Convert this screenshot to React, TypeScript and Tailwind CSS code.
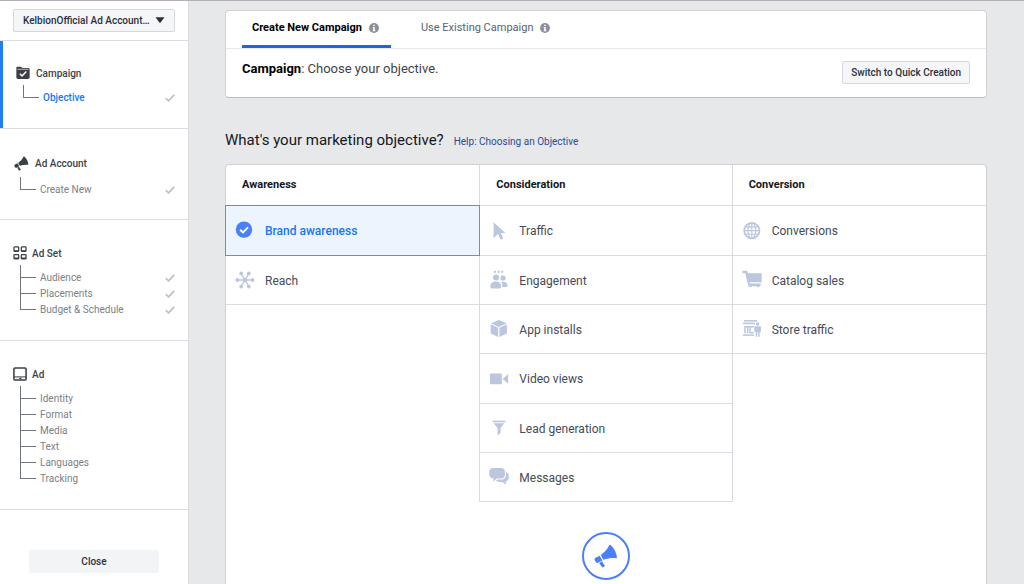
import { useState, type ReactNode } from 'react';

function Drawing({ children, className = 'size-5' }: { children: ReactNode; className?: string }) {
  return (
    <svg viewBox="0 0 20 20" fill="currentColor" aria-hidden="true" className={`shrink-0 ${className}`}>
      {children}
    </svg>
  );
}

const icons: Record<string, ReactNode> = {
  reach: (
    <Drawing>
      <path d="M2.5 10h15M6 3.5l8 13M14 3.5l-8 13" stroke="currentColor" strokeWidth="1.4" />
      <circle cx="10" cy="10" r="2.2" />
      <circle cx="2.4" cy="10" r="1.9" />
      <circle cx="17.6" cy="10" r="1.9" />
      <circle cx="6.2" cy="3.4" r="1.9" />
      <circle cx="13.8" cy="3.4" r="1.9" />
      <circle cx="6.2" cy="16.6" r="1.9" />
      <circle cx="13.8" cy="16.6" r="1.9" />
    </Drawing>
  ),
  traffic: (
    <Drawing>
      <path d="M4.6 1.2L16.4 12h-4.5l2.4 5.6-2.7 1.2-2.5-5.7-4.5 4z" />
    </Drawing>
  ),
  engagement: (
    <Drawing>
      <rect x="5" y="0.8" width="2" height="2" />
      <rect x="8.6" y="0.8" width="2" height="2" />
      <rect x="12.2" y="0.8" width="2" height="2" />
      <circle cx="7" cy="7.5" r="3" />
      <circle cx="14" cy="8" r="2.6" />
      <path d="M1.4 16.4c0-3.2 2.2-4.9 5.4-4.9s5.4 1.7 5.4 4.900c0 1.600-.7 2-2 2H3.400c-1.300 0-2-.4-2-2z" />
      <path d="M12.300 12.100c.6-.3 1.300-.4 2-.4 2.500 0 4.200 1.500 4.200 4 0 .9-.5 1.200-1.400 1.200h-3.800c0-2-.2-3.500-1-4.800z" />
    </Drawing>
  ),
  apps: (
    <Drawing>
      <path d="M9.800 1l7.800 3.200-7.800 3.700L2 4.200z" />
      <path d="M1.700 5.300l7.500 3.500v9.200l-7.500-3.600z" />
      <path d="M17.900 5.300l-7.500 3.500v9.200l7.500-3.600z" />
    </Drawing>
  ),
  video: (
    <Drawing>
      <rect x="1" y="4.600" width="11.800" height="10.600" rx="0.600" />
      <path d="M13.600 9.900l5.600-4.800v9.600z" />
    </Drawing>
  ),
  lead: (
    <Drawing>
      <rect x="3.600" y="2.600" width="12.800" height="1.700" />
      <path d="M4.600 5.300h10.800L11.600 10v5l-3 2.600V10z" />
    </Drawing>
  ),
  messages: (
    <Drawing>
      <path d="M4.300 1h7.600a4 4 0 0 1 4 4v2.500a4 4 0 0 1-4 4H8l-3.600 3v-3A4 4 0 0 1 .3 7.500V5a4 4 0 0 1 4-4z" />
      <path d="M17 4.700c1.700.8 2.700 2.200 2.700 4.100v1.700c0 2-1.100 3.500-2.900 4.100v3.200l-3.500-2.900h-3.200c-1.300 0-2.300-.5-3-1.300l1.500-1h3.600c2.800 0 4.800-2 4.800-4.800z" />
    </Drawing>
  ),
  conversions: (
    <Drawing>
      <g fill="none" stroke="currentColor">
        <circle cx="9.800" cy="9.600" r="7.700" strokeWidth="1.700" />
        <ellipse cx="9.800" cy="9.600" rx="3.900" ry="7.700" strokeWidth="1.100" />
        <path d="M9.800 2v15.200M2.200 9.600h15.200M3.500 5.900h12.600M3.500 13.300h12.600" strokeWidth="1.100" />
      </g>
    </Drawing>
  ),
  catalog: (
    <Drawing>
      <path d="M.4.800h4.700l.7 2.400h13.900v9H7.400l.4 1.400h11v2h-1a1.500 1.500 0 0 1-2.900.700H10a1.500 1.500 0 0 1-2.900-.4l-.9-.3L3.300 3.300H.4z" />
    </Drawing>
  ),
  store: (
    <Drawing>
      <rect x="2" y="1" width="13" height="1.600" />
      <rect x="1" y="3.600" width="12" height="1.600" />
      <path d="M2.200 7h9.600v1.500h-3v4.600h3v1.500H7.300V8.500H6.400v6.100H5V8.500H3.700v6.100H2.200z" />
      <rect x="1" y="15.400" width="11" height="1.500" />
      <circle cx="15.600" cy="5" r="1.700" />
      <path d="M13.200 7.300h4.800c.6 0 1 .4 1 1v4.400h-1.300v5.100h-1.500v-4.600h-1v4.600h-1.500v-5.100h-1.400V8.300c0-.6.300-1 .9-1z" />
    </Drawing>
  ),
};

function CheckCircle() {
  return (
    <Drawing>
      <circle cx="9" cy="8.600" r="8.200" fill="#4a80fa" />
      <path d="M5.200 8.700l2.800 2.700 5-5" fill="none" stroke="#fff" strokeWidth="2" />
    </Drawing>
  );
}

function Megaphone({ className }: { className?: string }) {
  return (
    <Drawing className={className}>
      <path d="M13.700.8c2.800 2.300 5 6.200 5.400 10.200 0 .5-.2.800-.7.800-3.500-.2-7.200.1-10.600 1.300L5.600 9.200C8.500 7.200 11 4.500 12.700 1.100c.2-.5.600-.6 1-.3z" />
      <path d="M4.700 9.700l2.300 4-3.400 1.800a1.600 1.600 0 0 1-2.200-.6l-.7-1.300a1.600 1.600 0 0 1 .6-2.200z" />
      <path d="M4.300 15.800l2.600-1.400.7 1.800 1.300 1.500c.3.400.2.700-.1.900l-1.200.8c-.4.200-.8.100-1-.2z" />
    </Drawing>
  );
}

const sectionIcons: Record<string, ReactNode> = {
  campaign: (
    <Drawing className="size-[14px]">
      <path d="M1.500 1h6l1.500 2h8.500c1.200 0 2 .8 2 2v11c0 1.500-1 2.500-2.500 2.500H3C1.500 18.500.5 17.500.5 16V2c0-.6.4-1 1-1z" />
      <path d="M2 4.700h16" stroke="#fff" strokeWidth="0.900" />
      <path d="M5.500 11l3.200 3.200 6-6.300" fill="none" stroke="#fff" strokeWidth="2.200" />
    </Drawing>
  ),
  account: <Megaphone className="size-[15px]" />,
  adset: (
    <Drawing className="size-[14px]">
      <g fill="none" stroke="currentColor" strokeWidth="1.800">
        <rect x="1.400" y="1.400" width="6.700" height="6.200" rx="1" />
        <rect x="11.900" y="1.400" width="6.700" height="6.200" rx="1" />
        <rect x="1.400" y="12.200" width="6.700" height="6.200" rx="1" />
        <rect x="11.900" y="12.200" width="6.700" height="6.200" rx="1" />
      </g>
      <path d="M1.400 6h6.700v2H1.400zM11.900 6h6.700v2h-6.700zM1.400 16.500h6.700v2H1.400zM11.900 16.500h6.700v2h-6.700z" />
    </Drawing>
  ),
  ad: (
    <Drawing className="size-[14px]">
      <rect x="1.300" y="1.300" width="17.400" height="17.400" rx="2" fill="none" stroke="currentColor" strokeWidth="2.200" />
      <path d="M1.500 13.400h17v1.500h-17z" />
      <path d="M9 15.500h3v2H9z" />
    </Drawing>
  ),
};

function Tick() {
  return (
    <svg viewBox="0 0 10 10" className="size-[10px] shrink-0" aria-label="Complete" role="img">
      <path d="M0.800 5.200l2.700 2.700 5.700-6" fill="none" stroke="#bbbec9" strokeWidth="1.600" />
    </svg>
  );
}

function Info() {
  return (
    <svg viewBox="0 0 10 10" className="size-[10px] shrink-0" aria-hidden="true">
      <circle cx="5" cy="5" r="4.900" fill="#8a8f99" />
      <path d="M4.200 1.700h1.600v1.400H4.200zM3.700 4h2.100v3.200h.6v1H3.600v-1h.6V5h-.5z" fill="#fff" />
    </svg>
  );
}

type Section = {
  icon: string;
  title: string;
  pad: string;
  tree: string;
  head: string;
  done: boolean;
  items: string[];
};

const sections: Section[] = [
  { icon: 'campaign', title: 'Campaign', pad: 'pt-6 pb-[22px]', head: 'pl-[16px] gap-[6px]', tree: 'mt-1 pl-[23px]', done: true, items: ['Objective'] },
  { icon: 'account', title: 'Ad Account', pad: 'pt-[26px] pb-[21px]', head: 'pl-[14px] gap-[6px]', tree: 'mt-[6px] pl-[20px]', done: true, items: ['Create New'] },
  { icon: 'adset', title: 'Ad Set', pad: 'pt-[25px] pb-[22px]', head: 'pl-[13px] gap-[5px]', tree: 'mt-1 pl-[20px]', done: true, items: ['Audience', 'Placements', 'Budget & Schedule'] },
  { icon: 'ad', title: 'Ad', pad: 'pt-[25px] pb-[22px]', head: 'pl-[13px] gap-[5px]', tree: 'mt-1 pl-[20px]', done: false, items: ['Identity', 'Format', 'Media', 'Text', 'Languages', 'Tracking'] },
];

function SectionBlock({ section, current }: { section: Section; current: boolean }) {
  return (
    <section
      className={`border-b border-[#dcdee1] ${section.pad} ${current ? 'shadow-[inset_3px_0_0_#2080ee]' : ''}`}
    >
      <h2 className={`flex h-4 items-center text-[10px] font-medium text-[#3b3f47] ${section.head}`}>
        {sectionIcons[section.icon]}
        {section.title}
      </h2>
      <ul className={`pr-[13px] ${section.tree}`}>
        <li aria-hidden="true" className="h-[5px] border-l border-[#70747b]" />
        {section.items.map((item, i) => (
          <li key={item} className="flex h-4 items-center">
            <span aria-hidden="true" className="flex w-4 shrink-0 flex-col self-stretch">
              <span className="h-2 border-b border-l border-[#70747b]" />
              {i < section.items.length - 1 && <span className="flex-1 border-l border-[#70747b]" />}
            </span>
            <a
              href="#"
              className={`ml-1 flex-1 text-[10px] leading-4 ${current ? 'font-medium text-[#1877f2]' : 'text-[#7b7f86]'}`}
            >
              {item}
            </a>
            {section.done && <Tick />}
          </li>
        ))}
      </ul>
    </section>
  );
}

const columns = [
  { title: 'Awareness', items: [['Brand awareness', 'reach'], ['Reach', 'reach']] },
  {
    title: 'Consideration',
    items: [
      ['Traffic', 'traffic'],
      ['Engagement', 'engagement'],
      ['App installs', 'apps'],
      ['Video views', 'video'],
      ['Lead generation', 'lead'],
      ['Messages', 'messages'],
    ],
  },
  { title: 'Conversion', items: [['Conversions', 'conversions'], ['Catalog sales', 'catalog'], ['Store traffic', 'store']] },
];

const tabs = ['Create New Campaign', 'Use Existing Campaign'];

export default function App() {
  const [tab, setTab] = useState(tabs[0]);
  const [objective, setObjective] = useState('Brand awareness');

  return (
    <div className="flex min-h-screen border-t border-[#b3aeb3] bg-[#e7e8ea] font-['Roboto',sans-serif]">
      <aside className="w-[189px] shrink-0 border-r border-[#d8dadd] bg-white">
        <div className="border-b border-[#dcdee1] px-[13px] py-2">
          <div className="relative">
            <select
              aria-label="Ad account"
              className="block h-[23px] w-full appearance-none rounded-xs border border-[#d5d8dc] bg-[#f5f6f7] pr-6 pl-[9px] text-[10px] font-medium text-[#2b303b]"
            >
              <option>KelbionOfficial Ad Account…</option>
            </select>
            <svg viewBox="0 0 10 6" aria-hidden="true" className="pointer-events-none absolute top-2 right-[10px] h-[6px] w-[10px]">
              <path d="M.5.300h9L5.600 5.500a.8.800 0 0 1-1.200 0z" fill="#2b303b" />
            </svg>
          </div>
        </div>
        <nav aria-label="Campaign steps">
          {sections.map((section, i) => (
            <SectionBlock key={section.title} section={section} current={i === 0} />
          ))}
        </nav>
        <div className="px-[29px] pt-[38px]">
          <button type="button" className="h-[23px] w-full rounded-xs bg-[#f3f4f6] text-[10px] font-medium text-[#2b303b]">
            Close
          </button>
        </div>
      </aside>

      <main className="flex min-w-0 flex-1 flex-col pt-[9px] pr-[37px] pl-[36px]">
        <section className="rounded border border-[#cfd1d5] border-b-[#b9bcc2] bg-white">
          <div role="tablist" className="flex gap-5 border-b border-[#e9eaec] px-4">
            {tabs.map((name) => (
              <button
                key={name}
                type="button"
                role="tab"
                aria-selected={tab === name}
                onClick={() => setTab(name)}
                className={`flex h-[37px] items-center gap-[7px] border-b-[3px] pr-3 pl-[10px] text-[11px] ${
                  tab === name ? 'border-[#1c65e4] font-bold text-black' : 'border-transparent text-[#5a6270]'
                }`}
              >
                {name}
                <Info />
              </button>
            ))}
          </div>
          <div className="flex h-12 items-start justify-between px-4">
            <h1 className="pt-[10px] text-[13px] leading-5 text-[#3f4248]">
              <b className="text-black">Campaign</b>: Choose your objective.
            </h1>
            <button
              type="button"
              className="mt-3 h-[23px] rounded-xs border border-[#d5d8dc] bg-[#f5f6f7] px-2 text-[10px] font-medium text-[#2b303b]"
            >
              Switch to Quick Creation
            </button>
          </div>
        </section>

        <div className="mt-8 flex h-5 items-baseline gap-[10px]">
          <h2 className="text-[15px] leading-5 text-[#14171c]">What's your marketing objective?</h2>
          <a href="#" className="text-[10px] leading-4 text-[#2c4a93]">
            Help: Choosing an Objective
          </a>
        </div>

        <section className="mt-[14px] flex flex-1 flex-col rounded-t border border-b-0 border-[#cfd1d5] bg-white">
          <div className="grid grid-cols-3 items-start">
            {columns.map((column, c) => (
              <div key={column.title} className={c === 1 ? 'border-x border-[#d8dadf]' : ''}>
                <h3 className="flex h-[41px] items-center border-b border-[#dadde1] pl-4 text-[11px] font-bold text-[#14171c]">
                  {column.title}
                </h3>
                <ul>
                  {column.items.map(([label, icon]) => {
                    const selected = objective === label;
                    return (
                      <li key={label} className="h-[49px] border-b border-[#dadde1] nth-[3n+1]:h-[50px]">
                        <button
                          type="button"
                          aria-pressed={selected}
                          onClick={() => setObjective(label)}
                          className={`flex h-full w-full items-center gap-[10px] pl-[9px] text-left text-[12px] ${
                            selected
                              ? 'relative bg-[#ecf4fe] font-medium text-[#1877f2] shadow-[0_0_0_1px_#4a98ee]'
                              : 'text-[#444b57]'
                          }`}
                        >
                          <span className="text-[#bcc6de]">{selected ? <CheckCircle /> : icons[icon]}</span>
                          <span className="pt-px">{label}</span>
                        </button>
                      </li>
                    );
                  })}
                </ul>
              </div>
            ))}
          </div>
          <div className="flex justify-center pt-[30px]">
            <div className="flex size-12 items-center justify-center rounded-full border-2 border-[#4a80fa] text-[#4a80fa]">
              <Megaphone className="size-6" />
            </div>
          </div>
        </section>
      </main>
    </div>
  );
}
